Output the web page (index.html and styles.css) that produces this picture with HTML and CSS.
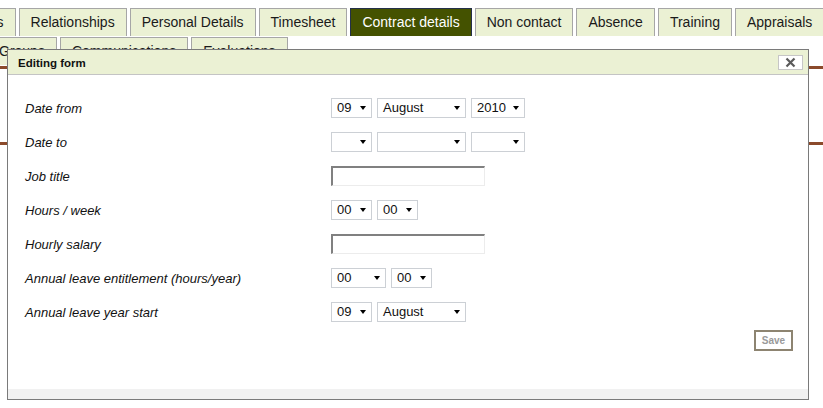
FILE: index.html
```html
<!DOCTYPE html>
<html>
<head>
<meta charset="utf-8">
<title>Contract details</title>
<link rel="stylesheet" href="styles.css">
</head>
<body>
<div class="page">
  <nav class="tabs row1">
    <a class="tab">Notes</a>
    <a class="tab">Relationships</a>
    <a class="tab">Personal Details</a>
    <a class="tab">Timesheet</a>
    <a class="tab active">Contract details</a>
    <a class="tab">Non contact</a>
    <a class="tab">Absence</a>
    <a class="tab">Training</a>
    <a class="tab">Appraisals</a>
  </nav>
  <nav class="tabs row2">
    <a class="tab">Groups</a>
    <a class="tab">Communications</a>
    <a class="tab">Evaluations</a>
  </nav>
  <div class="section"></div>
  <div class="section"></div>
</div>

<div class="dialog">
  <div class="dlg-head">
    <span class="dlg-title">Editing form</span>
    <button class="dlg-close" type="button" aria-label="Close">
      <svg width="11" height="11" viewBox="0 0 11 11"><path d="M1.5 1.5 L9.5 9.5 M9.5 1.5 L1.5 9.5" stroke="#5a5a5a" stroke-width="2.2" fill="none"/></svg>
    </button>
  </div>
  <div class="dlg-body">
    <form class="form">
      <label class="lbl">Date from</label>
      <div class="ctl">
        <span class="sel w-d">09</span>
        <span class="sel w-m">August</span>
        <span class="sel w-y">2010</span>
      </div>
      <label class="lbl">Date to</label>
      <div class="ctl">
        <span class="sel w-d"></span>
        <span class="sel w-m"></span>
        <span class="sel w-y"></span>
      </div>
      <label class="lbl">Job title</label>
      <div class="ctl"><input class="txt" type="text"></div>
      <label class="lbl">Hours / week</label>
      <div class="ctl">
        <span class="sel w-d">00</span>
        <span class="sel w-d">00</span>
      </div>
      <label class="lbl">Hourly salary</label>
      <div class="ctl"><input class="txt" type="text"></div>
      <label class="lbl">Annual leave entitlement (hours/year)</label>
      <div class="ctl">
        <span class="sel w-h">00</span>
        <span class="sel w-d2">00</span>
      </div>
      <label class="lbl">Annual leave year start</label>
      <div class="ctl">
        <span class="sel w-d">09</span>
        <span class="sel w-m">August</span>
      </div>
    </form>
    <div class="actions"><button class="save" type="button">Save</button></div>
  </div>
  <div class="dlg-foot"></div>
</div>
</body>
</html>
```
FILE: styles.css
```css
* { box-sizing: border-box; }
html, body { margin: 0; padding: 0; background: #fff; }
body {
  font-family: "Liberation Sans", Arial, sans-serif;
  color: #111;
  overflow: hidden;
  width: 823px;
  height: 408px;
  position: relative;
}

.page { width: 823px; }

.tabs {
  display: flex;
  gap: 3px;
  white-space: nowrap;
}
.row1 { padding-top: 8px; margin-left: -45px; }
.row2 { margin-top: 1px; margin-left: -13px; }

.tab {
  display: block;
  height: 28px;
  padding: 0 11px;
  line-height: 26px;
  font-size: 14px;
  color: #1a1a1a;
  background: #ebf1d4;
  border: 1px solid #a6a6a6;
  border-bottom: none;
  flex: none;
}
.tab.active {
  background: #445200;
  color: #fff;
  border-color: #24304a;
}

.section {
  height: 76px;
  border-bottom: 3px solid #8b4a2b;
}
.section:first-of-type { height: 4px; }

/* dialog overlay */
.dialog {
  position: absolute;
  left: 7px;
  top: 49px;
  width: 802px;
  height: 351px;
  background: #fff;
  border: 1px solid #7a7a7a;
  display: flex;
  flex-direction: column;
}
.dialog::before {
  content: "";
  position: absolute;
  left: -5px;
  right: -5px;
  top: 3px;
  bottom: -4px;
  background: rgba(0, 0, 0, 0.12);
  z-index: -1;
}

.dlg-head {
  height: 25px;
  flex: none;
  background: #ebf1d4;
  border-bottom: 1px solid #c4c4c4;
  display: flex;
  align-items: center;
  justify-content: space-between;
  padding: 0 5px 0 10px;
}
.dlg-title {
  font-size: 11.5px;
  font-weight: bold;
  color: #111;
  padding-top: 1px;
}
.dlg-close {
  width: 25px;
  height: 15px;
  padding: 0;
  margin: 0;
  background: #fff;
  border: 1px solid #c6c6c6;
  display: flex;
  align-items: center;
  justify-content: center;
}

.dlg-body {
  flex: 1;
  padding: 16px 15px 0 17px;
}

.form {
  display: grid;
  grid-template-columns: 306px auto;
  grid-auto-rows: 34px;
  align-items: center;
  margin: 0;
}
.lbl {
  font-size: 13px;
  font-style: italic;
  color: #111;
  padding-top: 1px;
}
.ctl {
  display: flex;
  gap: 5px;
  align-items: center;
}

.sel {
  position: relative;
  display: block;
  height: 20px;
  border: 1px solid #ccd0d5;
  background: #fff;
  font-size: 13px;
  line-height: 18px;
  padding-left: 5px;
  color: #111;
}
.sel::after {
  content: "";
  position: absolute;
  right: 5px;
  top: 7px;
  border-top: 4px solid #000;
  border-left: 3.5px solid transparent;
  border-right: 3.5px solid transparent;
}
.w-d { width: 41px; }
.w-m { width: 89px; }
.w-y { width: 54px; }
.w-h { width: 55px; }
.w-d2 { width: 41px; }

.txt {
  width: 154px;
  height: 20px;
  margin: 0;
  padding: 0;
  background: #fff;
  border-top: 2px solid #808080;
  border-left: 2px solid #808080;
  border-right: 1px solid #ececec;
  border-bottom: 1px solid #ececec;
  outline: none;
}

.actions {
  display: flex;
  justify-content: flex-end;
  margin-top: 1px;
}
.save {
  width: 39px;
  height: 21px;
  padding: 0;
  background: #fff;
  border: 2px solid #8d8471;
  font-family: "Liberation Sans", Arial, sans-serif;
  font-size: 10px;
  font-weight: bold;
  color: #9a9a9a;
}

.dlg-foot {
  height: 10px;
  flex: none;
  background: #f1f1f1;
}
```
